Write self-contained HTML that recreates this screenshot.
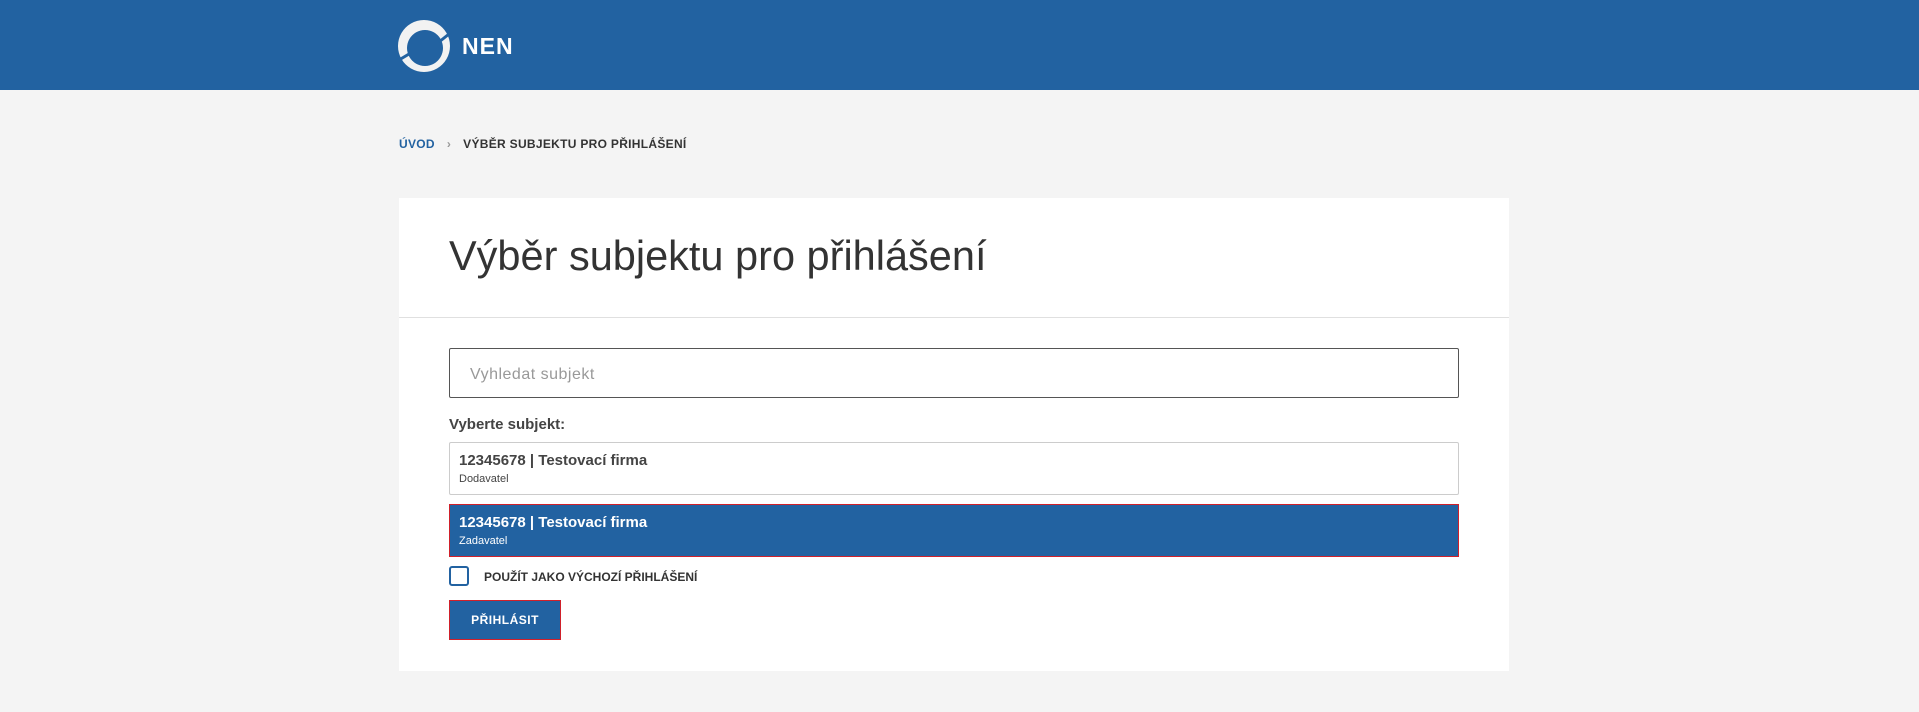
<!DOCTYPE html>
<html><head><meta charset="utf-8"><style>
*{margin:0;padding:0;box-sizing:border-box}
body{width:1919px;height:712px;background:#f4f4f4;font-family:"Liberation Sans",Arial,sans-serif;position:relative;overflow:hidden}
.hdr{position:absolute;left:0;top:0;width:1919px;height:90px;background:#2262a1}
.nen{position:absolute;left:462px;top:33px;color:#fff;font-weight:bold;font-size:23px;letter-spacing:1px}
.bc{position:absolute;top:137px;left:399px;font-size:12px;font-weight:bold;color:#333;letter-spacing:.3px}
.bc .u{color:#2262a1}
.bc .s{color:#999;margin:0 12px}
.card{position:absolute;left:399px;top:198px;width:1110px;height:473px;background:#fff}
h1{position:absolute;left:50px;top:34px;font-weight:normal;font-size:41.5px;color:#333}
.div{position:absolute;left:0;top:119px;width:1110px;height:1px;background:#e0e0e0}
.inp{position:absolute;left:50px;top:150px;width:1010px;height:50px;border:1px solid #555;border-radius:2px;font-size:16px;color:#999;padding:17px 20px;letter-spacing:.5px}
.lab{position:absolute;left:50px;top:218px;font-size:15px;font-weight:bold;color:#444}
.it{position:absolute;left:50px;width:1010px;height:53px;border:1px solid #ccc;border-radius:2px;padding:9px 9px}
.it b{display:block;font-size:15px;color:#444}
.it span{display:block;font-size:11px;color:#444;margin-top:4px}
.sel{background:#2262a1;border:1px solid #d0202a;border-radius:0}
.sel b,.sel span{color:#fff}
.cb{position:absolute;left:50px;top:368px;width:20px;height:20px;border:2px solid #2262a1;border-radius:3px}
.cbl{position:absolute;left:85px;top:372px;font-size:12px;font-weight:bold;color:#333}
.btn{position:absolute;left:50px;top:402px;width:112px;height:40px;background:#2262a1;border:1px solid #d0202a;color:#fff;font-size:12px;font-weight:bold;text-align:center;line-height:38px;letter-spacing:.5px}
</style></head><body>
<div class="hdr">
<svg style="position:absolute;left:397px;top:20px" width="54" height="54" viewBox="0 0 54 54">
<path fill-rule="evenodd" fill="#f2f2f2" d="M27 0A26 26 0 1 1 26.99 0ZM28 10A18 18 0 1 0 28.01 10Z"/>
<path d="M52 14L42 22" stroke="#2262a1" stroke-width="3"/>
<path d="M2 40L12 34" stroke="#2262a1" stroke-width="3"/>
</svg>
<div class="nen">NEN</div>
</div>
<div class="bc"><span class="u">ÚVOD</span><span class="s">›</span>VÝBĚR SUBJEKTU PRO PŘIHLÁŠENÍ</div>
<div class="card">
<h1>Výběr subjektu pro přihlášení</h1>
<div class="div"></div>
<div class="inp">Vyhledat subjekt</div>
<div class="lab">Vyberte subjekt:</div>
<div class="it" style="top:244px"><b>12345678 | Testovací firma</b><span>Dodavatel</span></div>
<div class="it sel" style="top:306px"><b>12345678 | Testovací firma</b><span>Zadavatel</span></div>
<div class="cb"></div>
<div class="cbl">POUŽÍT JAKO VÝCHOZÍ PŘIHLÁŠENÍ</div>
<div class="btn">PŘIHLÁSIT</div>
</div>
</body></html>
